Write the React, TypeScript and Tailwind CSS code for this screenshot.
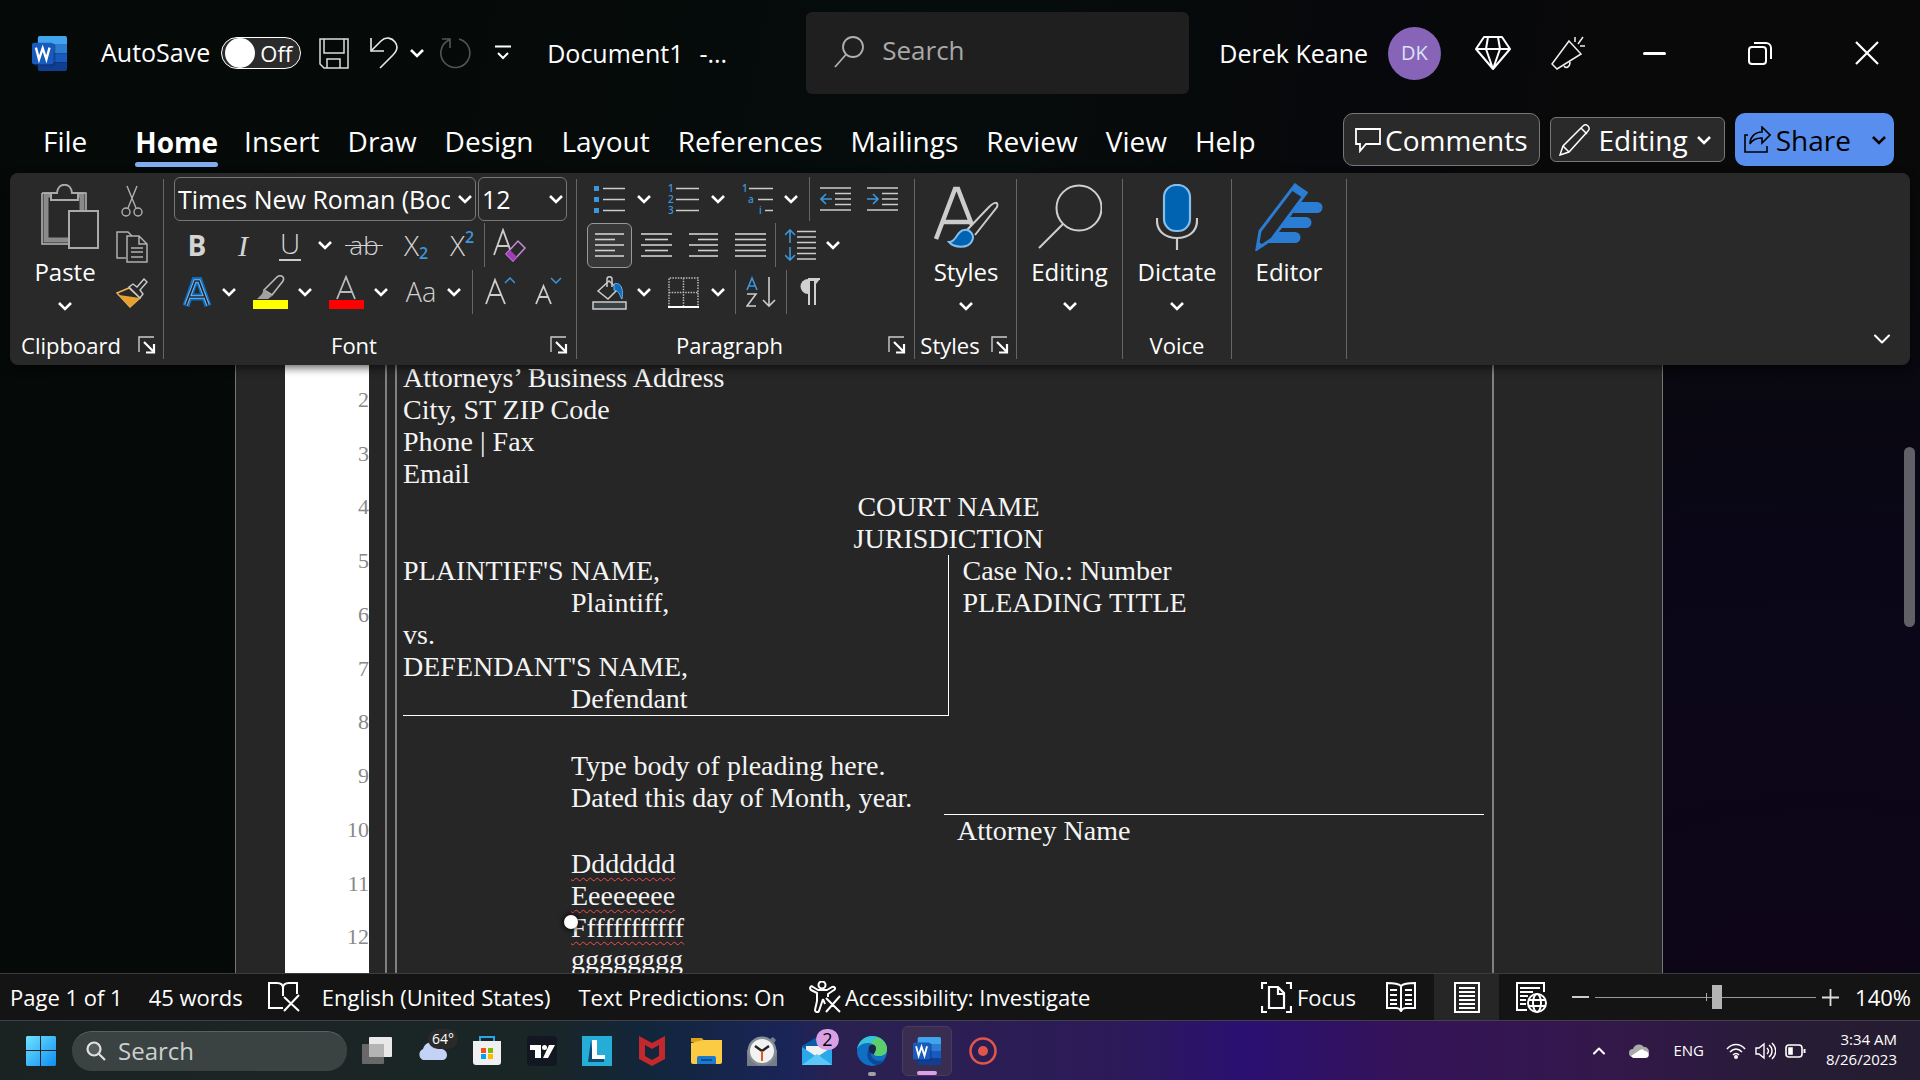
import type { ReactNode } from 'react';
import { ChevronDown, ChevronUp } from 'lucide-react';

const tabs = ['File', 'Home', 'Insert', 'Draw', 'Design', 'Layout', 'References', 'Mailings', 'Review', 'View', 'Help'];

function Caret() {
  return (
    <svg viewBox="0 0 16 10" className="w-4 h-[10px] shrink-0" fill="none" stroke="currentColor" strokeWidth="2.6">
      <path d="M2 2l6 6 6-6" />
    </svg>
  );
}

function Launcher({ label }: { label: string }) {
  return (
    <button aria-label={label} className="shrink-0">
      <svg viewBox="0 0 18 18" className="w-[18px] h-[18px]" fill="none" stroke="#fff">
        <path d="M1 16V1h15" strokeWidth="1.4" stroke="#ccc" />
        <path d="M6 6l9 9M16 8v8.5H8" strokeWidth="2.2" />
      </svg>
    </button>
  );
}

function Sep() {
  return <div className="w-px h-11 bg-[#666] shrink-0" />;
}

function IconButton({ label, children, className = '' }: { label: string; children: ReactNode; className?: string }) {
  return (
    <button aria-label={label} className={`flex items-center justify-center shrink-0 ${className}`}>
      {children}
    </button>
  );
}

function Split({ label, children, className = 'gap-[9px]' }: { label: string; children: ReactNode; className?: string }) {
  return (
    <button aria-label={label} className={`flex items-center shrink-0 ${className}`}>
      {children}
      <Caret />
    </button>
  );
}

function Lines({ rows }: { rows: number[][] }) {
  return (
    <svg viewBox="0 0 31 26" className="w-[31px] h-[26px]" stroke="#d0d0d0" strokeWidth="1.6">
      {rows.map(([a, b], i) => (
        <path key={i} d={`M${a} ${2 + i * 5.5}H${b}`} />
      ))}
    </svg>
  );
}

function WordLogo({ className }: { className: string }) {
  return (
    <svg viewBox="0 0 36 36" className={className}>
      <path d="M8 0h26a2 2 0 0 1 2 2v7H6V2a2 2 0 0 1 2-2z" fill="#41a5ee" />
      <path d="M6 9h30v9H6z" fill="#2b7cd3" />
      <path d="M6 18h30v9H6z" fill="#185abd" />
      <path d="M6 27h30v7a2 2 0 0 1-2 2H8a2 2 0 0 1-2-2z" fill="#103f91" />
      <rect x="2" y="8" width="22" height="23" rx="2" fill="#0d2f6b" opacity=".5" />
      <rect x="0" y="7" width="22" height="22" rx="2" fill="#185abd" />
      <path d="M4 12l3.2 12L11 12.5 14.8 24 18 12" fill="none" stroke="#fff" strokeWidth="2.4" />
    </svg>
  );
}

function TitleBar() {
  return (
    <header className="h-[106px] flex items-center pl-8 text-[25px] shrink-0">
      <WordLogo className="w-[35px] h-[35px]" />
      <label className="flex items-center gap-[11px] ml-[34px]">
        AutoSave
        <input type="checkbox" role="switch" className="sr-only" />
        <span className="w-20 h-8 rounded-full border border-white bg-[#2b2b2b] flex items-center justify-between pl-[3px] pr-2">
          <span className="w-[30px] h-[30px] rounded-full bg-white" />
          <span className="text-[22px] leading-none">Off</span>
        </span>
      </label>
      <IconButton label="Save" className="ml-[18px]">
        <svg viewBox="0 0 30 31" className="w-[30px] h-[31px]" fill="none" stroke="#ddd" strokeWidth="1.5">
          <path d="M1 1h28v29H5l-4-4z" />
          <path d="M5 1v14h20V1M8 30v-9h13v9" />
        </svg>
      </IconButton>
      <button aria-label="Undo" className="flex items-center gap-[10px] ml-5">
        <svg viewBox="0 0 30 32" className="w-[30px] h-8" fill="none" stroke="#e8e8e8" strokeWidth="1.6">
          <path d="M2 1v13h13" />
          <path d="M2 14L12 4c5-5 11-3 14 1s2 9-2 13L11 31" />
        </svg>
        <Caret />
      </button>
      <IconButton label="Redo" className="ml-[14px]">
        <svg viewBox="0 0 32 32" className="w-8 h-8" fill="none" stroke="#555" strokeWidth="1.6">
          <path d="M20 2A14.500 14.500 0 1 1 10 3M3 2h8v9" />
        </svg>
      </IconButton>
      <IconButton label="Customize Quick Access Toolbar" className="ml-6">
        <svg viewBox="0 0 16 16" className="w-4 h-4" fill="none" stroke="#fff" strokeWidth="2">
          <path d="M0 1.500h16M3 8l5 5 5-5" />
        </svg>
      </IconButton>
      <div className="ml-9 pt-[2px] flex gap-4 w-[186px] whitespace-nowrap">
        <span>Document1</span>
        <span>-...</span>
      </div>
      <label className="ml-[73px] w-[383px] h-[82px] bg-[#1f1f1f] rounded-md flex items-center gap-[18px] pl-7 pb-[6px] shrink-0">
        <svg viewBox="0 0 30 32" className="w-[30px] h-8 shrink-0 mt-1" fill="none" stroke="#b0b0b0" strokeWidth="1.8">
          <circle cx="19" cy="11" r="10" />
          <path d="M12 18.5L1 31" />
        </svg>
        <input type="search" placeholder="Search" aria-label="Search" className="w-full min-w-0 bg-transparent text-[26px] placeholder:text-[#a8a8a8] outline-none" />
      </label>
      <div className="ml-auto flex items-center shrink-0">
        <span className="whitespace-nowrap pt-[2px]">Derek Keane</span>
        <button className="ml-[20px] w-[53px] h-[53px] rounded-full bg-[#8764b8] text-[20px] text-[#d9e2f5]">DK</button>
        <IconButton label="Premium" className="ml-[34px]">
          <svg viewBox="0 0 36 34" className="w-9 h-[34px]" fill="none" stroke="#fff" strokeWidth="2" strokeLinejoin="round">
            <path d="M9 1h18l8 12-17 20L1 13zM1 13h34M13 1l-2 12 7 20 7-20-2-12" />
          </svg>
        </IconButton>
        <IconButton label="What's new" className="ml-10">
          <svg viewBox="0 0 34 34" className="w-[34px] h-[34px]" fill="none" stroke="#eee" strokeWidth="1.5">
            <path d="M18 5l12 13L6 33l-5-5zM13 30c2 3 6 1 6-4M24 6V1M27 8l5-7M29 10h5" />
          </svg>
        </IconButton>
        <IconButton label="Minimize" className="ml-4 w-[106px] h-14">
          <span className="w-[23px] h-[3px] rounded-full bg-white" />
        </IconButton>
        <IconButton label="Restore" className="w-[106px] h-14">
          <svg viewBox="0 0 24 24" className="w-6 h-6" fill="none" stroke="#fff" strokeWidth="2">
            <rect x="1" y="6" width="17" height="17" rx="3" />
            <path d="M6 2h12a5 5 0 0 1 5 5v11" />
          </svg>
        </IconButton>
        <IconButton label="Close" className="w-[107px] h-14">
          <svg viewBox="0 0 24 24" className="w-6 h-6" stroke="#fff" strokeWidth="2.2">
            <path d="M1 1l22 22M23 1L1 23" />
          </svg>
        </IconButton>
      </div>
    </header>
  );
}

function TabBar() {
  return (
    <nav className="h-[67px] flex items-center pl-[29px] pr-[26px] text-[28px] shrink-0">
      {tabs.map((tab) => (
        <button
          key={tab}
          className={
            tab === 'Home'
              ? 'relative mr-3 h-[54px] font-bold leading-[54px] pt-[2px] after:absolute after:left-0 after:right-0 after:bottom-0 after:h-[5px] after:rounded-sm after:bg-[#82acf0]'
              : tab === 'File'
                ? 'pl-[14px] pr-12 pt-[2px]'
                : 'px-[14px] pt-[2px]'
          }
        >
          {tab}
        </button>
      ))}
      <div className="ml-auto flex items-center gap-[10px]">
        <button className="h-[53px] px-[11px] rounded-[10px] border border-[#777] bg-[#2a2a2a] flex items-center gap-1">
          <svg viewBox="0 0 26 26" className="w-[26px] h-[26px]" fill="none" stroke="#fff" strokeWidth="1.8">
            <path d="M1 2h24v15H11l-6 7v-7H1z" />
          </svg>
          Comments
        </button>
        <button className="h-[45px] px-2 rounded-md border border-[#777] bg-[#2a2a2a] flex items-center gap-2">
          <svg viewBox="0 0 32 32" className="w-8 h-8" fill="none" stroke="#fff" strokeWidth="1.5">
            <path d="M1 31l3-9L24 2c2-2 4-1 5 0s2 3 0 5L10 28zM4 22l6 6M22 4l6 6" />
          </svg>
          Editing
          <span className="mr-1"><Caret /></span>
        </button>
        <button className="h-[53px] pl-[9px] pr-[7px] rounded-[10px] bg-[#588fee] text-black flex items-center gap-[5px]">
          <svg viewBox="0 0 27 27" className="w-[27px] h-[27px]" fill="none" stroke="#000" strokeWidth="1.6">
            <path d="M4 9H1v17h22v-6" />
            <path d="M18 1l8 8-8 8v-5c-6 0-10 2-12 6 0-7 5-12 12-12z" />
          </svg>
          Share
          <span className="ml-[15px]"><Caret /></span>
        </button>
      </div>
    </nav>
  );
}

function Group({ label, launcher, className, children }: { label?: string; launcher?: boolean; className: string; children: ReactNode }) {
  return (
    <section className={`relative flex flex-col h-[180px] border-r border-[#666] shrink-0 ${className}`}>
      <div className="flex-1">{children}</div>
      <div className="h-[28px] flex items-center text-[22px] leading-7">
        <span className={launcher ? 'flex-1 text-center pr-[6px]' : 'flex-1 text-center'}>{label}</span>
        {launcher && <Launcher label={`${label} settings`} />}
      </div>
    </section>
  );
}

function BigButton({ label, caret = true, children }: { label: string; caret?: boolean; children: ReactNode }) {
  return (
    <button className="flex flex-col items-center w-full pt-1 text-[24px]">
      <span className="h-[68px] flex items-center">{children}</span>
      <span className="leading-8 mt-[5px] mb-[13px]">{label}</span>
      {caret && <Caret />}
    </button>
  );
}

function ClipboardGroup() {
  return (
    <Group label="Clipboard" launcher className="w-[154px] pr-[7px]">
      <div className="flex pl-[22px]">
        <div className="w-[66px]">
          <BigButton label="Paste">
            <svg viewBox="0 0 60 66" className="w-[60px] h-[66px] ml-[10px]" fill="none">
              <path d="M6 11h36v45H6z" stroke="#8a8a8a" strokeWidth="5" />
              <path d="M2 9h44v17M2 9v51h26" stroke="#bbb" strokeWidth="1.5" />
              <path d="M11 16V9h6c1-11 14-11 15 0h6v7z" fill="#292929" stroke="#aaa" strokeWidth="2" />
              <path d="M29 27h29v37H29z" fill="#292929" stroke="#aaa" strokeWidth="2" />
            </svg>
          </BigButton>
        </div>
        <div className="flex flex-col pl-[18px]">
          <IconButton label="Cut" className="w-[32px] h-11">
            <svg viewBox="0 0 22 32" className="w-[22px] h-8" fill="none" stroke="#b0b0b0" strokeWidth="1.4">
              <circle cx="5" cy="27" r="4" />
              <circle cx="17" cy="27" r="4" />
              <path d="M6 1l9 22M16 1L7 23" />
            </svg>
          </IconButton>
          <IconButton label="Copy" className="w-[32px] h-[47px]">
            <svg viewBox="0 0 32 32" className="w-8 h-8" fill="none" stroke="#b0b0b0" strokeWidth="1.5">
              <path d="M10 27H1V1h11l4 4" />
              <path d="M11 5h12l8 8v18H11zM23 5v8h8M15 17h12M15 21h12M15 26h12" />
            </svg>
          </IconButton>
          <IconButton label="Format Painter" className="w-[32px] h-[46px]">
            <svg viewBox="0 0 32 30" className="w-8 h-[30px]">
              <path d="M1 15l12-5 11 10-10 9z" fill="#292929" stroke="#e8b060" strokeWidth="1.5" />
              <path d="M3 17l21 3-10 9z" fill="#e8a030" />
              <path d="M13 9l4-3 4 3 7-8 3 3-7 8 3 4-3 4z" fill="#292929" stroke="#ccc" strokeWidth="1.4" />
            </svg>
          </IconButton>
        </div>
      </div>
    </Group>
  );
}

function FontGroup() {
  return (
    <Group label="Font" launcher className="w-[413px] pr-2">
      <div className="flex gap-[2px] pl-[10px] -mt-[2px] text-[25px]">
        <label className="relative w-[302px] h-11">
          <select aria-label="Font name" className="appearance-none w-full h-full pl-[3px] pr-[25px] pt-[2px] rounded-md border border-[#777] bg-transparent overflow-hidden">
            <option>Times New Roman (Body CS)</option>
          </select>
          <span className="absolute right-[3px] top-[17px] pointer-events-none"><Caret /></span>
        </label>
        <label className="relative w-[89px] h-11">
          <select aria-label="Font size" className="appearance-none w-full h-full pl-[3px] pr-6 pt-[2px] rounded-md border border-[#777] bg-transparent">
            <option>12</option>
          </select>
          <span className="absolute right-[3px] top-[17px] pointer-events-none"><Caret /></span>
        </label>
      </div>
      <div className="flex items-center h-[48px] pl-[10px] text-[#d4d4d4]">
        <IconButton label="Bold" className="w-[46px] text-[28px] font-bold">B</IconButton>
        <IconButton label="Italic" className="w-[46px] text-[30px] italic font-['Liberation_Serif',serif]">I</IconButton>
        <button aria-label="Underline" className="w-12 h-9 flex flex-col items-center">
          <span className="text-[28px] leading-[32px] font-light">U</span>
          <span className="w-[22px] h-[2px] bg-[#ccc] shrink-0" />
        </button>
        <IconButton label="Underline style" className="w-[22px] text-white"><Caret /></IconButton>
        <IconButton label="Strikethrough" className="w-[56px]">
          <span className="text-[26px] font-light line-through decoration-1">&#8201;ab&#8201;</span>
        </IconButton>
        <IconButton label="Subscript" className="w-[48px] text-[28px] leading-8">
          <span className="font-light">X</span>
          <span className="text-[16px] leading-4 text-[#3a96dd] self-end font-semibold">2</span>
        </IconButton>
        <IconButton label="Superscript" className="w-[44px] text-[28px] leading-8">
          <span className="font-light">X</span>
          <span className="text-[16px] leading-4 text-[#3a96dd] self-start font-semibold">2</span>
        </IconButton>
        <Sep />
        <IconButton label="Clear Formatting" className="w-[50px]">
          <svg viewBox="0 0 34 34" className="w-[34px] h-[34px]" fill="none">
            <path d="M1 27L10 2l8 22M4.500 18H15" stroke="#ccc" strokeWidth="1.8" />
            <path d="M13 26L25 13l7 7-12 13z" fill="#292929" stroke="#c58ad8" strokeWidth="1.5" />
            <path d="M13 26l4-4 7 7-4 4z" fill="#a33cb8" />
          </svg>
        </IconButton>
      </div>
      <div className="flex items-center h-[46px] pl-[18px] gap-4">
        <Split label="Text Effects">
          <svg viewBox="0 0 30 30" className="w-[30px] h-[30px]" fill="none">
            <path d="M4 29L13 3h4l9 26M8 20h14" stroke="#0f6cbd" strokeWidth="7" />
            <path d="M4 28L13 4h4l9 24M8 20h14" stroke="#75b6ee" strokeWidth="3.6" />
            <path d="M4 28L13 4h4l9 24M8 20h14" stroke="#1c2733" strokeWidth="1.6" />
          </svg>
        </Split>
        <Split label="Text Highlight Color">
          <svg viewBox="0 0 35 34" className="w-[35px] h-[34px]" fill="none">
            <path d="M11 15L24 2c4-3 8 0 6 4L19 20z" stroke="#bbb" strokeWidth="1.6" />
            <path d="M11 14l8 7-4 3H4l5-5z" fill="#a0a0a0" />
            <rect y="25" width="35" height="9" fill="#ff0" />
          </svg>
        </Split>
        <Split label="Font Color">
          <svg viewBox="0 0 35 34" className="w-[35px] h-[34px]" fill="none">
            <path d="M8 24l9-22 9 22M11 17h12" stroke="#bbb" strokeWidth="1.8" />
            <rect y="25" width="35" height="9" fill="#f00" />
          </svg>
        </Split>
        <Split label="Change Case">
          <span className="w-8 text-[27px] font-light text-[#d0d0d0]">Aa</span>
        </Split>
        <div className="flex items-center -ml-[6px]">
          <Sep />
          <IconButton label="Increase Font Size" className="ml-3">
            <svg viewBox="0 0 30 30" className="w-[30px] h-[30px]" fill="none">
              <path d="M1 27L10 3l10 24M5 18h11" stroke="#ccc" strokeWidth="1.8" />
              <path d="M20 6l5-5 5 5" stroke="#3a96dd" strokeWidth="1.5" />
            </svg>
          </IconButton>
          <IconButton label="Decrease Font Size" className="ml-5">
            <svg viewBox="0 0 28 30" className="w-7 h-[30px]" fill="none">
              <path d="M1 27L8.500 9 16 27M4 20h9" stroke="#ccc" strokeWidth="1.8" />
              <path d="M16 1l5 5 5-5" stroke="#3a96dd" strokeWidth="1.5" />
            </svg>
          </IconButton>
        </div>
      </div>
    </Group>
  );
}

function ParagraphGroup() {
  return (
    <Group label="Paragraph" launcher className="w-[338px] pr-2">
      <div className="flex items-center h-[44px] -mt-[2px] pl-[17px] gap-4">
        <Split label="Bullets" className="gap-[11px]">
          <svg viewBox="0 0 31 28" className="w-[31px] h-7">
            <path d="M0 1h5v5H0zM0 12h5v5H0zM0 23h5v5H0z" fill="#3a96dd" />
            <path d="M9 3.500h22M9 14.500h22M9 25.500h22" stroke="#ccc" strokeWidth="1.6" />
          </svg>
        </Split>
        <Split label="Numbering" className="gap-[11px]">
          <svg viewBox="0 0 31 32" className="w-[31px] h-8 overflow-visible" fontSize="10" fontFamily="Open Sans" fill="#3a96dd" fontWeight="600">
            <text x="0" y="9">1</text>
            <text x="0" y="20">2</text>
            <text x="0" y="31">3</text>
            <path d="M8 5.500h23M8 16.500h23M8 27.500h23" stroke="#ccc" strokeWidth="1.6" />
          </svg>
        </Split>
        <Split label="Multilevel List" className="gap-[10px]">
          <svg viewBox="0 0 31 32" className="w-[31px] h-8 overflow-visible" fontSize="10" fontFamily="Open Sans" fill="#3a96dd" fontWeight="600">
            <text x="0" y="9">1</text>
            <text x="6" y="20">a</text>
            <text x="17" y="31">i</text>
            <path d="M7 5.500h24M16 16.500h15M23 27.500h8" stroke="#ccc" strokeWidth="1.6" />
          </svg>
        </Split>
        <div className="flex items-center gap-4 -ml-[6px]">
          <div className="-mr-[6px]"><Sep /></div>
          <IconButton label="Decrease Indent">
            <svg viewBox="0 0 31 26" className="w-[31px] h-[26px]" fill="none" stroke="#ccc" strokeWidth="1.6">
              <path d="M0 2h31M15 7.500h16M15 13h16M15 18.500h16M0 24h31" />
              <path d="M12 13H1M6 8l-5 5 5 5" stroke="#3a96dd" />
            </svg>
          </IconButton>
          <IconButton label="Increase Indent">
            <svg viewBox="0 0 31 26" className="w-[31px] h-[26px]" fill="none" stroke="#ccc" strokeWidth="1.6">
              <path d="M0 2h31M15 7.500h16M15 13h16M15 18.500h16M0 24h31" />
              <path d="M0 13h11M6 8l5 5-5 5" stroke="#3a96dd" />
            </svg>
          </IconButton>
        </div>
      </div>
      <div className="flex items-center h-[48px] pl-[10px]">
        <IconButton label="Align Left" className="w-[45px] h-[45px] rounded-md border border-[#999] bg-[#383838]">
          <Lines rows={[[1, 30], [1, 21], [1, 30], [1, 21], [1, 30]]} />
        </IconButton>
        <div className="flex items-center gap-4 px-[9px]">
          <IconButton label="Center"><Lines rows={[[0, 31], [4, 27], [0, 31], [4, 27], [0, 31]]} /></IconButton>
          <IconButton label="Align Right"><Lines rows={[[1, 30], [10, 30], [1, 30], [10, 30], [1, 30]]} /></IconButton>
          <IconButton label="Justify"><Lines rows={[[0, 31], [0, 31], [0, 31], [0, 31], [0, 31]]} /></IconButton>
        </div>
        <Sep />
        <div className="pl-[9px]">
          <Split label="Line Spacing">
            <svg viewBox="0 0 31 32" className="w-[31px] h-8" fill="none">
              <path d="M5 14V1M0 6l5-5 5 5M5 18v13M0 26l5 5 5-5" stroke="#3a96dd" strokeWidth="1.6" />
              <path d="M12 2.500h19M12 8h19M12 13.500h19M12 19h19M12 24.500h19M12 30h19" stroke="#ccc" strokeWidth="1.5" />
            </svg>
          </Split>
        </div>
      </div>
      <div className="flex items-center h-[46px] pl-[15px]">
        <Split label="Shading">
          <svg viewBox="0 0 35 35" className="w-[35px] h-[35px]" fill="none">
            <path d="M6 16L17 6l9 8-10 10z" stroke="#ccc" strokeWidth="1.5" />
            <path d="M15 12V4c0-3 5-3 5 0v8" stroke="#ccc" strokeWidth="1.5" />
            <path d="M22 9c5-2 10 2 8 15-2-2-2-8-8-9z" fill="#0f6cbd" stroke="#6cb1ea" />
            <path d="M1 27h33v7H1z" fill="#3b4244" stroke="#ccc" strokeWidth="1.5" />
          </svg>
        </Split>
        <div className="pl-4 pr-[9px]">
          <Split label="Borders" className="gap-[11px]">
            <svg viewBox="0 0 31 31" className="w-[31px] h-[31px]" fill="none" stroke="#bbb" strokeWidth="1.5">
              <path d="M1 30V1h29v29M15.500 1v29M1 15.500h29" strokeDasharray="1.5 1.2" />
              <path d="M0 30h31" stroke="#fff" strokeWidth="2" />
            </svg>
          </Split>
        </div>
        <Sep />
        <IconButton label="Sort" className="px-[10px]">
          <svg viewBox="0 0 30 32" className="w-[30px] h-8" fill="none" strokeWidth="1.6">
            <path d="M1 14L6 2l5 12M3 10h6" stroke="#3a96dd" />
            <path d="M1 18h9L1 30h9" stroke="#ccc" />
            <path d="M23 1v29M17 24l6 6 6-6" stroke="#ccc" />
          </svg>
        </IconButton>
        <Sep />
        <IconButton label="Show Formatting Marks" className="pl-3">
          <svg viewBox="0 0 22 28" className="w-[22px] h-7">
            <path d="M21 1H9a7 7 0 0 0 0 15z" fill="#d0d0d0" />
            <path d="M13 3v23" stroke="#292929" strokeWidth="4" />
            <path d="M9 1h12M10 1v26M16 1v26" stroke="#d0d0d0" strokeWidth="2" />
          </svg>
        </IconButton>
      </div>
    </Group>
  );
}

function Ribbon() {
  return (
    <div className="relative z-10 h-[192px] mx-[10px] pt-[6px] rounded-lg bg-[#292929] shadow-[0_3px_8px_rgba(0,0,0,0.6)] flex items-start shrink-0">
      <ClipboardGroup />
      <FontGroup />
      <ParagraphGroup />
      <Group label="Styles" launcher className="w-[102px] pr-[7px]">
        <div className="pl-2">
          <BigButton label="Styles">
            <svg viewBox="0 0 66 64" className="w-[66px] h-16" fill="none">
              <path d="M3 54L22 4h3l14 36M10 37h27" stroke="#ccc" strokeWidth="4.5" />
              <path d="M34 45L56 22c5-5 10-6 8 0L42 50" fill="#292929" stroke="#ccc" strokeWidth="2" />
              <path d="M16 57c8 0 7-11 15-12 6-1 11 5 8 11-4 8-18 7-23 1z" fill="#0063b1" stroke="#83beec" strokeWidth="2" />
            </svg>
          </BigButton>
        </div>
      </Group>
      <Group className="w-[106px]">
        <BigButton label="Editing">
          <svg viewBox="0 0 64 66" className="w-16 h-[66px]" fill="none" stroke="#d0d0d0" strokeWidth="2">
            <circle cx="41" cy="24" r="22.5" />
            <path d="M25 40L1 64" />
          </svg>
        </BigButton>
      </Group>
      <Group label="Voice" className="w-[109px]">
        <BigButton label="Dictate">
          <svg viewBox="0 0 42 66" className="w-[42px] h-[66px]" fill="none" stroke="#ccc" strokeWidth="2.2">
            <rect x="8" y="1" width="26" height="46" rx="12" fill="#0063b1" stroke="#83beec" />
            <path d="M1 34v3c0 10 8 17 20 17s20-7 20-17v-3M21 54v12" />
          </svg>
        </BigButton>
      </Group>
      <Group className="w-[115px]">
        <BigButton label="Editor" caret={false}>
          <svg viewBox="0 0 68 68" className="w-[68px] h-[68px]" fill="#2b7cd3">
            <path d="M44 19h18a5 5 0 0 1 0 11H38zM34 34h17a5 5 0 0 1 0 11H26zM22 49h18a5 5 0 0 1 0 11H12z" />
            <path d="M40 2l11 8-34 46-15 10 3-18z" fill="#292929" stroke="#2b7cd3" strokeWidth="3" />
            <path d="M40 1l13 8-5 6-12-8zM1 67l2-9 6 5z" />
          </svg>
        </BigButton>
      </Group>
      <IconButton label="Collapse Ribbon" className="ml-auto self-end mr-[14px] mb-3">
        <ChevronDown size={28} strokeWidth={1.8} />
      </IconButton>
    </div>
  );
}

function Misspelled({ children }: { children: ReactNode }) {
  return (
    <p>
      <span className="underline decoration-wavy decoration-[#f05050] decoration-1 underline-offset-4 [text-decoration-skip-ink:none]">
        {children}
      </span>
    </p>
  );
}

function Document() {
  return (
    <main className="relative flex-1 min-h-0 overflow-hidden pl-[235px] pr-[257px]">
      <div className="flex h-[640px] border-x border-[#777] bg-[#262626] pl-[49px] pr-[168px] font-['Liberation_Serif',serif] text-[#f4f4f4]">
        <div className="w-[84px] bg-white text-[#888] text-[22px] pt-[23px] pb-[26px] flex flex-col shrink-0">
          {[2, 3, 4, 5, 6, 7, 8, 9, 10, 11, 12].map((n) => (
            <div key={n} className="flex-1 text-right leading-6">{n}</div>
          ))}
        </div>
        <div className="ml-4 w-3 border-x-2 border-[#808080] shrink-0" />
        <div className="relative flex-1 pl-[6px] pr-[8px] border-r-2 border-[#808080] text-[28px] leading-8 -mt-[3px]">
          <p>Attorneys’ Business Address</p>
          <p>City, ST ZIP Code</p>
          <p>Phone | Fax</p>
          <p>Email</p>
          <div className="text-center pl-[10px] pt-px">
            <p>COURT NAME</p>
            <p>JURISDICTION</p>
          </div>
          <table className="w-full">
            <tbody>
              <tr>
                <td className="w-[545px] border-r border-b border-white p-0">
                  <p>PLAINTIFF'S NAME,</p>
                  <p className="pl-[168px]">Plaintiff,</p>
                  <p>vs.</p>
                  <p>DEFENDANT'S NAME,</p>
                  <p className="pl-[168px]">Defendant</p>
                </td>
                <td className="align-top p-0 pl-[14px]">
                  <p>Case No.: Number</p>
                  <p>PLEADING TITLE</p>
                </td>
              </tr>
            </tbody>
          </table>
          <div className="pl-[168px] pt-[34px]">
            <p>Type body of pleading here.</p>
            <p>Dated this day of Month, year.</p>
            <div className="ml-[373px] pl-[13px] border-t border-white">Attorney Name</div>
            <div className="pt-px">
              <Misspelled>Ddddddd</Misspelled>
              <Misspelled>Eeeeeeee</Misspelled>
              <div className="relative">
                <Misspelled>Ffffffffffff</Misspelled>
                <span className="absolute -left-[7px] top-[3px] w-[14px] h-[14px] rounded-full bg-white shadow-[0_0_4px_2px_rgba(0,0,0,0.6)]" />
              </div>
              <Misspelled>gggggggg</Misspelled>
            </div>
          </div>
        </div>
      </div>
      <div className="absolute right-[5px] top-[82px] w-[11px] h-[180px] rounded-full bg-[#606066]" />
    </main>
  );
}

function StatusBar() {
  return (
    <footer className="h-[47px] flex items-center bg-[#141414] border-t border-[#3c3c3c] text-[22px] whitespace-nowrap pl-[10px] pr-[9px] shrink-0">
      <button>Page 1 of 1</button>
      <button className="ml-[26px]">45 words</button>
      <IconButton label="Proofing errors" className="ml-[25px]">
        <svg viewBox="0 0 32 30" className="w-8 h-[30px]" fill="none" stroke="#fff" strokeWidth="2">
          <path d="M15 26H1V1h8c4 0 6 2 6 5v8M15 6c0-3 2-5 6-5h8v11M16 15l15 14M31 13L16 29" />
        </svg>
      </IconButton>
      <button className="ml-[22px]">English (United States)</button>
      <button className="ml-7">Text Predictions: On</button>
      <button className="ml-6 flex items-center gap-1">
        <svg viewBox="0 0 32 32" className="w-8 h-8" fill="none" stroke="#fff" strokeWidth="2" strokeLinejoin="round">
          <circle cx="13" cy="4" r="3.5" />
          <path d="M14 18l-4 12c-1 2-4 1-4-1l2-9v-8L2 9C0 7 2 4 4 6l5 3h9l5-3c3-1 4 2 2 3l-6 4v3M14 18l2 5M17 17l14 14M31 15L17 31" />
        </svg>
        Accessibility: Investigate
      </button>
      <div className="ml-auto flex items-center h-full">
        <button className="flex items-center gap-[5px]">
          <svg viewBox="0 0 31 31" className="w-[31px] h-[31px]" fill="none" stroke="#fff" strokeWidth="2.2">
            <path d="M1 7V1h5M25 1h5v6M1 24v6h5M25 30h5v-6M8 5h9l6 6v15H8zM17 5v7h6" />
          </svg>
          Focus
        </button>
        <IconButton label="Read Mode" className="ml-[30px]">
          <svg viewBox="0 0 30 30" className="w-[30px] h-[30px]" fill="none" stroke="#fff" strokeWidth="2">
            <path d="M15 4C12 1 7 1 1 1v25h9c3 0 4 1 5 3 1-2 2-3 5-3h9V1c-6 0-11 0-14 3zM15 4v24M4 8h7M4 13h7M4 18h7M4 22h7M19 8h7M19 13h7M19 18h7M19 22h7" />
          </svg>
        </IconButton>
        <IconButton label="Print Layout" className="ml-[18px] w-[65px] h-full bg-[#262626]">
          <svg viewBox="0 0 26 31" className="w-[26px] h-[31px]" fill="none" stroke="#fff" strokeWidth="2">
            <path d="M1 1h24v29H1zM5 6h16M5 10h16M5 14h16M5 18h16M5 22h16M5 26h16" />
          </svg>
        </IconButton>
        <IconButton label="Web Layout" className="ml-[17px]">
          <svg viewBox="0 0 32 31" className="w-8 h-[31px]" fill="none" stroke="#fff" strokeWidth="2">
            <path d="M11 28H1V1h27v9M4 6h20M4 10h13M4 14h8M4 18h6M4 22h6" />
            <circle cx="21" cy="21" r="9" />
            <ellipse cx="21" cy="21" rx="4" ry="9" />
            <path d="M13 18h16M13 24h16" />
          </svg>
        </IconButton>
        <IconButton label="Zoom Out" className="ml-6 w-[17px] h-8"><span className="w-[17px] h-[2px] bg-[#ccc]" /></IconButton>
        <div className="relative mx-[6px] w-[221px] h-6 flex items-center">
          <span className="absolute left-1/2 w-px h-2 bg-[#aaa]" />
          <input
            type="range"
            aria-label="Zoom"
            min="10"
            max="240"
            defaultValue="138"
            className="appearance-none w-full h-px bg-[#999] [&::-webkit-slider-thumb]:appearance-none [&::-webkit-slider-thumb]:w-[10px] [&::-webkit-slider-thumb]:h-6 [&::-webkit-slider-thumb]:bg-[#b4b4b4]"
          />
        </div>
        <IconButton label="Zoom In" className="w-[17px] h-8">
          <svg viewBox="0 0 17 17" className="w-[17px] h-[17px]" stroke="#ddd" strokeWidth="1.8">
            <path d="M8.500 0v17M0 8.500h17" />
          </svg>
        </IconButton>
        <button className="ml-4">140%</button>
      </div>
    </footer>
  );
}

function TaskItem({ label, children }: { label: string; children: ReactNode }) {
  return (
    <button aria-label={label} className="relative w-[45px] h-[50px] flex items-center justify-center shrink-0">
      {children}
    </button>
  );
}

function Taskbar() {
  return (
    <footer className="h-[60px] flex items-center border-t border-[#43404c] pl-[26px] pr-[23px] shrink-0 bg-[linear-gradient(90deg,#1b2322_0%,#1a2626_28%,#12263c_34%,#1a2458_41%,#2a2150_44%,#2c1a58_58%,#2b1072_65%,#341358_73%,#33184a_84%,#261c34_94%,#241c30_100%)]">
      <IconButton label="Start">
        <svg viewBox="0 0 30 30" className="w-[30px] h-[30px]">
          <defs>
            <linearGradient id="win" x1="0" y1="0" x2="1" y2="1">
              <stop offset="0" stopColor="#6fe3ff" />
              <stop offset="1" stopColor="#0f8df2" />
            </linearGradient>
          </defs>
          <path d="M1 0h13v14H0V1zM15 0h14l1 1v13H15zM0 15h14v15H1l-1-1zM15 15h15v14l-1 1H15z" fill="url(#win)" />
        </svg>
      </IconButton>
      <label className="ml-4 w-[275px] h-10 rounded-full bg-[#3a4342] border-t border-[#5a6261] flex items-center gap-3 pl-[14px] shrink-0">
        <svg viewBox="0 0 20 20" className="w-5 h-5 shrink-0" fill="#555d5c" stroke="#e0e0e0" strokeWidth="2.2">
          <circle cx="8" cy="8" r="6.5" />
          <path d="M12.500 12.500L19 19" />
        </svg>
        <input type="search" placeholder="Search" aria-label="Taskbar search" className="w-full min-w-0 bg-transparent text-[24px] placeholder:text-[#ccd0d0] outline-none" />
      </label>
      <div className="flex items-center gap-[10px] ml-[7px]">
        <TaskItem label="Task View">
          <svg viewBox="0 0 30 30" className="w-[30px] h-[30px]">
            <rect y="8" width="22" height="20" rx="1" fill="#686868" />
            <rect x="7" y="1" width="23" height="20" rx="1" fill="#e8e8e8" />
            <path d="M7 8h15v13H7z" fill="#b4b4b4" />
          </svg>
        </TaskItem>
        <TaskItem label="Weather">
          <svg viewBox="0 0 30 20" className="w-[30px] h-5" fill="#c3d3f5">
            <path d="M6 19a6 6 0 0 1 0-11C8 2 13 0 17 3c3 1 4 3 4 5 5-1 9 2 9 6 0 3-2 5-5 5z" />
          </svg>
          <span className="absolute -right-1 top-[3px] w-[30px] h-5 rounded-full bg-[#2a2a2a] text-[14px] leading-5 text-center">64°</span>
        </TaskItem>
        <TaskItem label="Microsoft Store">
          <svg viewBox="0 0 30 30" className="w-[30px] h-[30px]">
            <path d="M8 6V1h14v5" fill="none" stroke="#2aa5e8" strokeWidth="2" />
            <path d="M1 5h28v21a3 3 0 0 1-3 3H4a3 3 0 0 1-3-3z" fill="#f0f0f0" />
            <path d="M9 12h5v5H9z" fill="#f25022" />
            <path d="M16 12h5v5h-5z" fill="#7fba00" />
            <path d="M9 18h5v5H9z" fill="#00a4ef" />
            <path d="M16 18h5v5h-5z" fill="#ffb900" />
          </svg>
        </TaskItem>
        <TaskItem label="TradingView">
          <svg viewBox="0 0 30 30" className="w-[30px] h-[30px]">
            <rect width="30" height="30" rx="4" fill="#131722" />
            <path d="M3 9h11v13H8v-8H3zM21 22h-5l6-13h6z" fill="#fff" />
            <circle cx="17.5" cy="11.5" r="2.5" fill="#fff" />
          </svg>
        </TaskItem>
        <TaskItem label="Lexia">
          <svg viewBox="0 0 30 30" className="w-[30px] h-[30px]">
            <rect width="30" height="30" fill="#25add8" />
            <path d="M9 4L6 26h16v-3H11z" fill="#0d4a72" />
            <path d="M10 4h5v15h8v4H10z" fill="#fff" />
          </svg>
        </TaskItem>
        <TaskItem label="McAfee">
          <svg viewBox="0 0 28 30" className="w-7 h-[30px]">
            <path d="M1 0l13 7 13-7v23l-13 7-13-7zM7 9v11l7 4 7-4V9l-7 4z" fill="#c3282c" fillRule="evenodd" />
          </svg>
        </TaskItem>
        <TaskItem label="File Explorer">
          <svg viewBox="0 0 31 28" className="w-[31px] h-7">
            <path d="M0 1h11l3 4H0z" fill="#e2a01a" />
            <path d="M0 6l12-3h19v22a2 2 0 0 1-2 2H2a2 2 0 0 1-2-2z" fill="#fccb44" />
            <path d="M6 27v-6a2 2 0 0 1 2-2h15a2 2 0 0 1 2 2v6z" fill="#1a7ad0" />
            <path d="M10 23h11" stroke="#0b4f93" strokeWidth="2" />
          </svg>
        </TaskItem>
        <TaskItem label="Clock">
          <svg viewBox="0 0 30 30" className="w-[30px] h-[30px]">
            <path d="M0 14h30v16H0zM23 3l3-2 3 3-2 3z" fill="#747d86" />
            <circle cx="15" cy="15" r="14.5" fill="#858d95" />
            <circle cx="15" cy="15" r="12" fill="#f2f2f2" />
            <path d="M8 10l7 5 7-5" fill="none" stroke="#222" strokeWidth="2.4" />
            <path d="M15 15v10" stroke="#e05a20" strokeWidth="2" />
          </svg>
        </TaskItem>
        <TaskItem label="Mail">
          <svg viewBox="0 0 30 28" className="w-[30px] h-7">
            <path d="M0 9L15 0l15 9v6H0z" fill="#0a5ba8" />
            <path d="M4 9h22v10H4z" fill="#f0f0f0" />
            <path d="M0 10l15 10 15-10v18H0z" fill="#2aa8ec" />
            <path d="M0 28l15-11 15 11z" fill="#5cc8f7" />
          </svg>
          <span className="absolute right-0 top-[3px] w-[23px] h-[21px] rounded-full bg-[#d9a0e6] text-black text-[18px] leading-5 text-center">2</span>
        </TaskItem>
        <TaskItem label="Microsoft Edge">
          <svg viewBox="0 0 30 30" className="w-[30px] h-[30px]">
            <circle cx="15" cy="15" r="15" fill="#0f6fc5" />
            <path d="M0 14C1 5 8 0 15 0c9 0 15 6 15 13 0 5-4 7-8 7-3 0-5-1-5-2s2-2 2-5c0-4-4-6-8-6C5 7 1 10 0 14z" fill="#38c3d8" />
            <path d="M20 1c6 2 10 7 10 12 0 5-4 7-8 7-3 0-5-1-5-2s2-2 2-5c0-3-2-5-5-6z" fill="#5bd06a" />
            <path d="M11 14c-3 7 2 15 10 15 3-1 6-3 7-5-9 3-15-2-14-8z" fill="#0b4a94" />
            <path d="M19 12c0-3-3-4-5-3-3 1-3 5-1 7 1 2 4 2 4 2 0-1 2-3 2-6z" fill="#1d2348" />
          </svg>
          <span className="absolute bottom-0 w-2 h-1 rounded-full bg-[#a0a0a8]" />
        </TaskItem>
        <button aria-label="Word" className="relative w-[50px] h-[50px] -mx-[2px] rounded-md border border-[#4a3b5e] bg-[#3a2d52] flex items-center justify-center shrink-0">
          <WordLogo className="w-[30px] h-7" />
          <span className="absolute bottom-0 w-5 h-1 rounded-full bg-[#dba2e8]" />
        </button>
        <TaskItem label="Recorder">
          <svg viewBox="0 0 28 28" className="w-7 h-7">
            <circle cx="14" cy="14" r="12.5" fill="none" stroke="#e0564a" strokeWidth="2.6" />
            <circle cx="14" cy="14" r="5" fill="#e0564a" />
          </svg>
        </TaskItem>
      </div>
      <div className="ml-auto flex items-center text-[15px] whitespace-nowrap">
        <IconButton label="Show hidden icons"><ChevronUp size={20} strokeWidth={2.5} /></IconButton>
        <svg viewBox="0 0 20 14" className="w-5 h-[14px] ml-5">
          <path d="M4 13a4 4 0 0 1 0-8c1-4 7-7 11-2 3 0 5 2 5 5 0 4-2 5-4 5z" fill="#aaa" />
          <path d="M2 12l9-6c3-2 4 1 5 1 5 1 5 7 0 7H4z" fill="#fff" />
        </svg>
        <span className="ml-6">ENG</span>
        <button aria-label="Network, volume and battery" className="flex items-center gap-[9px] ml-[22px]">
          <svg viewBox="0 0 20 16" className="w-5 h-4" fill="none" stroke="#fff" strokeWidth="1.6">
            <path d="M1 6c5-6 13-6 18 0M4 9c4-4 8-4 12 0M7 12c2-2 4-2 6 0" />
            <circle cx="10" cy="14" r="1.2" fill="#fff" />
          </svg>
          <svg viewBox="0 0 21 18" className="w-[21px] h-[18px]" fill="none" stroke="#fff" strokeWidth="1.4">
            <path d="M1 6h3l5-4v14l-5-4H1zM12 6c2 2 2 4 0 6M14 3c4 3 4 9 0 12M17 1c5 5 5 11 0 16" />
          </svg>
          <svg viewBox="0 0 21 14" className="w-[21px] h-[14px]" fill="none" stroke="#fff" strokeWidth="1.6">
            <rect x="1" y="1" width="16" height="12" rx="3" />
            <path d="M19.500 5v4" strokeWidth="2" />
            <path d="M4 4h3v6H4z" fill="#fff" />
          </svg>
        </button>
        <div className="ml-5 pb-1 text-right leading-5">
          <div>3:34 AM</div>
          <div>8/26/2023</div>
        </div>
      </div>
    </footer>
  );
}

export default function App() {
  return (
    <div className="h-screen flex flex-col overflow-hidden text-white font-['Open_Sans',sans-serif] bg-[radial-gradient(ellipse_at_95%_90%,#0e0518_0%,#0a0618_30%,transparent_55%),linear-gradient(100deg,#050908_0%,#060c0b_45%,#07080b_65%,#090909_80%)]">
      <TitleBar />
      <TabBar />
      <Ribbon />
      <Document />
      <StatusBar />
      <Taskbar />
    </div>
  );
}
